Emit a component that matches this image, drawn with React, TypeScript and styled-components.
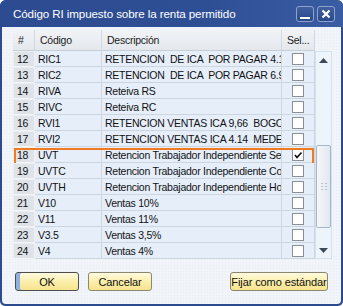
import React from "react";
import styled, { createGlobalStyle } from "styled-components";

const Global = createGlobalStyle`
  html, body { margin: 0; padding: 0; background: #ffffff; }
  body { font-family: "Liberation Sans", Arial, sans-serif; }
`;

const Window = styled.div`
  width: 343px;
  height: 306px;
  box-sizing: border-box;
  display: flex;
  flex-direction: column;
  background: #2c4a8e;
  border-radius: 6px 6px 5px 5px;
  overflow: hidden;
`;

const TitleBar = styled.div`
  height: 27px;
  flex: none;
  display: flex;
  align-items: center;
  padding: 0 8px 0 13px;
  background: linear-gradient(90deg, #2c4b90 0%, #2f4f95 60%, #3a5ca3 100%);
  color: #ffffff;
  font-size: 11.6px;
`;

const Title = styled.div`
  flex: 1;
  letter-spacing: -0.1px;
`;

const WinButtons = styled.div`
  display: flex;
  gap: 3px;
`;

const WinButton = styled.div`
  width: 18px;
  height: 16px;
  box-sizing: border-box;
  border: 1px solid #8ea3cc;
  border-radius: 3px;
  background: linear-gradient(#3f5f9f, #2b4a8a);
  display: flex;
  align-items: center;
  justify-content: center;
`;

const Body = styled.div`
  flex: 1;
  margin: 0 2px 2px 2px;
  background-color: #f1f5fa;
  background-image: radial-gradient(#e6edf6 0.6px, transparent 0.7px);
  background-size: 3px 3px;
  border-radius: 0 0 4px 4px;
  padding: 3px 9px 0 11px;
  display: flex;
  flex-direction: column;
`;

const TableArea = styled.div`
  display: flex;
  align-items: flex-start;
`;

const Table = styled.div`
  width: 302px;
  display: flex;
  flex-direction: column;
  font-size: 10.5px;
  letter-spacing: -0.25px;
  color: #111;
`;

const HeadRow = styled.div`
  display: flex;
  height: 21px;
`;

const Row = styled.div<{ $hl?: boolean }>`
  display: flex;
  height: 16px;
  position: relative;
  &::after {
    content: "";
    display: ${(p) => (p.$hl ? "block" : "none")};
    position: absolute;
    left: 1px;
    right: 1px;
    top: 1px;
    bottom: -2px;
    border: 2px solid #f07a22;
    pointer-events: none;
  }
`;

const HeadCell = styled.div<{ $w: number }>`
  width: ${(p) => p.$w}px;
  flex: none;
  box-sizing: border-box;
  display: flex;
  align-items: center;
  padding-left: 5px;
  background: linear-gradient(#f1f3f6, #e4e8ed);
  border-right: 1px solid #d2d8df;
  border-bottom: 1px solid #c6ced7;
  color: #222;
  white-space: nowrap;
  overflow: hidden;
`;

const NumCell = styled.div`
  width: 22px;
  flex: none;
  box-sizing: border-box;
  display: flex;
  align-items: center;
  padding-left: 4px;
  background: #dfe3e8;
  border-right: 1px solid #eef1f4;
  border-bottom: 1px solid #f3f5f7;
  box-shadow: inset 1px 1px 0 #eceff2;
`;

const Cell = styled.div<{ $w: number; $sel?: boolean }>`
  width: ${(p) => p.$w}px;
  flex: none;
  box-sizing: border-box;
  display: flex;
  align-items: center;
  padding-left: ${(p) => (p.$sel ? "0" : "3px")};
  justify-content: ${(p) => (p.$sel ? "center" : "flex-start")};
  background: #e6eefa;
  border-right: 1px solid #cdd5de;
  border-bottom: 1px solid #cdd5de;
  white-space: pre;
  overflow: hidden;
`;

const Box = styled.div`
  width: 12px;
  height: 12px;
  box-sizing: border-box;
  border: 1px solid #8c9096;
  background: #ffffff;
  display: flex;
  align-items: center;
  justify-content: center;
`;

const Scrollbar = styled.div`
  margin-top: 21px;
  width: 17px;
  height: 208px;
  box-sizing: border-box;
  border: 1px solid #d3e0ee;
  background: #eef4fb;
  display: flex;
  flex-direction: column;
  align-items: center;
`;

const Arrow = styled.div`
  height: 16px;
  flex: none;
  display: flex;
  align-items: center;
  justify-content: center;
`;

const Track = styled.div`
  flex: 1;
  width: 100%;
  display: flex;
  flex-direction: column;
  align-items: center;
  padding-top: 77px;
  box-sizing: border-box;
`;

const Thumb = styled.div`
  width: 15px;
  height: 83px;
  box-sizing: border-box;
  border: 1px solid #a9b6c6;
  border-radius: 2px;
  background: linear-gradient(90deg, #f4f7fa, #e2e8ef);
  display: flex;
  align-items: center;
  justify-content: center;
`;

const Footer = styled.div`
  display: flex;
  align-items: center;
  margin-top: 13px;
  padding: 0 4px 0 2px;
  gap: 9px;
`;

const Button = styled.div<{ $focus?: boolean; $w: number }>`
  width: ${(p) => p.$w}px;
  height: 19px;
  box-sizing: border-box;
  border: 1px solid ${(p) => (p.$focus ? "#4d4d4d" : "#8a8670")};
  border-radius: 3px;
  background: linear-gradient(#fffbe0, #fbeea8 55%, #f6e38e);
  box-shadow: ${(p) => (p.$focus ? "inset 4px 0 0 #8eb0e4" : "none")};
  display: flex;
  align-items: center;
  justify-content: center;
  font-size: 11px;
  letter-spacing: -0.1px;
  color: #111;
  white-space: nowrap;
`;

const Spacer = styled.div`
  flex: 1;
`;

const rows: [string, string, string, boolean][] = [
  ["12", "RIC1", "RETENCION  DE ICA  POR PAGAR 4.14", false],
  ["13", "RIC2", "RETENCION  DE ICA  POR PAGAR 6.99", false],
  ["14", "RIVA", "Reteiva RS", false],
  ["15", "RIVC", "Reteiva RC", false],
  ["16", "RVI1", "RETENCION VENTAS ICA 9,66  BOGOTA", false],
  ["17", "RVI2", "RETENCION VENTAS ICA 4.14  MEDELLIN", false],
  ["18", "UVT", "Retencion Trabajador Independiente Servicios", true],
  ["19", "UVTC", "Retencion Trabajador Independiente Compras", false],
  ["20", "UVTH", "Retencion Trabajador Independiente Honorarios", false],
  ["21", "V10", "Ventas 10%", false],
  ["22", "V11", "Ventas 11%", false],
  ["23", "V3.5", "Ventas 3,5%", false],
  ["24", "V4", "Ventas 4%", false],
];

export default function App() {
  return (
    <>
      <Global />
      <Window>
        <TitleBar>
          <Title>Código RI impuesto sobre la renta permitido</Title>
          <WinButtons>
            <WinButton>
              <svg width="12" height="12" viewBox="0 0 12 12">
                <rect x="1" y="9" width="10" height="2" fill="#ffffff" />
              </svg>
            </WinButton>
            <WinButton>
              <svg width="10" height="10" viewBox="0 0 10 10">
                <path d="M1.5 1.5 L8.5 8.5 M8.5 1.5 L1.5 8.5" stroke="#ffffff" strokeWidth="2.2" />
              </svg>
            </WinButton>
          </WinButtons>
        </TitleBar>
        <Body>
          <TableArea>
            <Table>
              <HeadRow>
                <HeadCell $w={22}>#</HeadCell>
                <HeadCell $w={67}>Código</HeadCell>
                <HeadCell $w={180}>Descripción</HeadCell>
                <HeadCell $w={33}>Sel...</HeadCell>
              </HeadRow>
              {rows.map(([n, c, d, chk]) => (
                <Row key={n} $hl={chk}>
                  <NumCell>{n}</NumCell>
                  <Cell $w={67}>{c}</Cell>
                  <Cell $w={180}>{d}</Cell>
                  <Cell $w={33} $sel>
                    <Box>
                      {chk && (
                        <svg width="10" height="10" viewBox="0 0 10 10">
                          <path d="M2 5 L4 7.5 L8.5 2.5" stroke="#111" strokeWidth="1.6" fill="none" />
                        </svg>
                      )}
                    </Box>
                  </Cell>
                </Row>
              ))}
            </Table>
            <Scrollbar>
              <Arrow>
                <svg width="9" height="5" viewBox="0 0 9 5">
                  <path d="M0 5 L4.5 0 L9 5 Z" fill="#3d4a5a" />
                </svg>
              </Arrow>
              <Track>
                <Thumb>
                  <svg width="6" height="7" viewBox="0 0 6 7">
                    {[0, 3, 6].map((y) =>
                      [0, 4].map((x) => (
                        <rect key={`${x}-${y}`} x={x} y={y} width="2" height="1" fill="#b8c2ce" />
                      ))
                    )}
                  </svg>
                </Thumb>
              </Track>
              <Arrow>
                <svg width="9" height="5" viewBox="0 0 9 5">
                  <path d="M0 0 L9 0 L4.5 5 Z" fill="#3d4a5a" />
                </svg>
              </Arrow>
            </Scrollbar>
          </TableArea>
          <Footer>
            <Button $focus $w={64}>OK</Button>
            <Button $w={64}>Cancelar</Button>
            <Spacer />
            <Button $w={98}>Fijar como estándar</Button>
          </Footer>
        </Body>
      </Window>
    </>
  );
}
